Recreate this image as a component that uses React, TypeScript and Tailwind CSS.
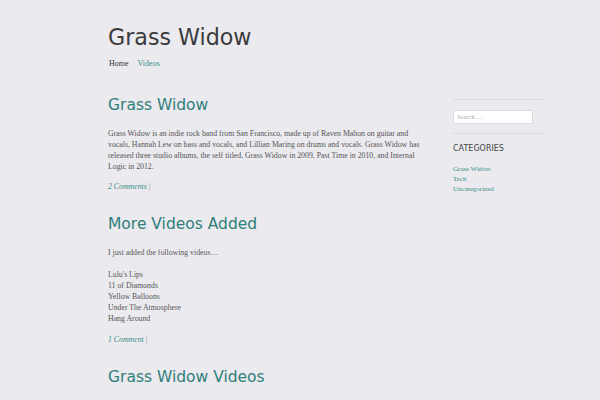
const serif = "font-['Liberation_Serif',serif]";
const sans = "font-['DejaVu_Sans',sans-serif]";

const videos = ["Lulu's Lips", '11 of Diamonds', 'Yellow Balloons', 'Under The Atmosphere', 'Hang Around'];
const categories = ['Grass Widow', 'Tech', 'Uncategorized'];

export default function App() {
  return (
    <div className="min-h-[400px] w-[600px] overflow-hidden bg-[#ebeaef]">
      <div className="ml-[108px] w-[440px]">
        {/* Header */}
        <header className="pt-[22px]">
          <h1 className={`${sans} text-[22.2px] leading-[30px] text-[#3a3a3c]`}>Grass Widow</h1>
          <nav className={`${serif} mt-[6px] flex gap-[9px] text-[8px] leading-[11px]`}>
            <span className="pl-px text-[#333]">Home</span>
            <span className="text-[#3a8f88]">Videos</span>
          </nav>
        </header>

        <div className="mt-[23px] flex">
          {/* Posts */}
          <main className="w-[322px]">
            <article>
              <h2 className={`${sans} text-[15.5px] leading-[26px] text-[#2f7f7a]`}>Grass Widow</h2>
              <p className={`${serif} mt-[10px] text-[7.8px] leading-[11px] text-[#555]`}>
                Grass Widow is an indie rock band from San Francisco, made up of Raven Mahon on guitar and
                vocals, Hannah Lew on bass and vocals, and Lillian Maring on drums and vocals. Grass Widow has
                released three studio albums, the self titled, Grass Widow in 2009, Past Time in 2010, and Internal
                Logic in 2012.
              </p>
              <p className={`${serif} mt-[9px] text-[7.8px] leading-[11px] text-[#888]`}>
                <span className="italic text-[#3a8f88]">2 Comments</span> |
              </p>
            </article>

            <article className="mt-[19px]">
              <h2 className={`${sans} text-[15.5px] leading-[26px] text-[#2f7f7a]`}>More Videos Added</h2>
              <p className={`${serif} mt-[10px] text-[7.8px] leading-[11px] text-[#555]`}>
                I just added the following videos…
              </p>
              <ul className={`${serif} mt-[11px] text-[7.8px] leading-[11px] text-[#555]`}>
                {videos.map((v) => (
                  <li key={v}>{v}</li>
                ))}
              </ul>
              <p className={`${serif} mt-[10px] text-[7.8px] leading-[11px] text-[#888]`}>
                <span className="italic text-[#3a8f88]">1 Comment</span> |
              </p>
            </article>

            <article className="mt-[19px]">
              <h2 className={`${sans} text-[15.5px] leading-[26px] text-[#2f7f7a]`}>Grass Widow Videos</h2>
            </article>
          </main>

          {/* Sidebar */}
          <aside className="ml-[23px] w-[93px] pt-[7px]">
            <div className="border-t border-[#dcdbe0] pt-[10px] pb-[9px]">
              <div className={`${serif} flex h-[14px] w-[80px] items-center border border-[#dddce0] bg-white px-[3px] text-[6.5px] text-[#aaa]`}>
                Search …
              </div>
            </div>
            <div className="border-t border-[#dcdbe0] pt-[9px]">
              <h3 className={`${sans} text-[8px] leading-[12px] text-[#444]`}>CATEGORIES</h3>
              <ul className={`${serif} mt-[9px] text-[7px] leading-[10px] text-[#3a8f88]`}>
                {categories.map((c) => (
                  <li key={c}>{c}</li>
                ))}
              </ul>
            </div>
          </aside>
        </div>
      </div>
    </div>
  );
}
